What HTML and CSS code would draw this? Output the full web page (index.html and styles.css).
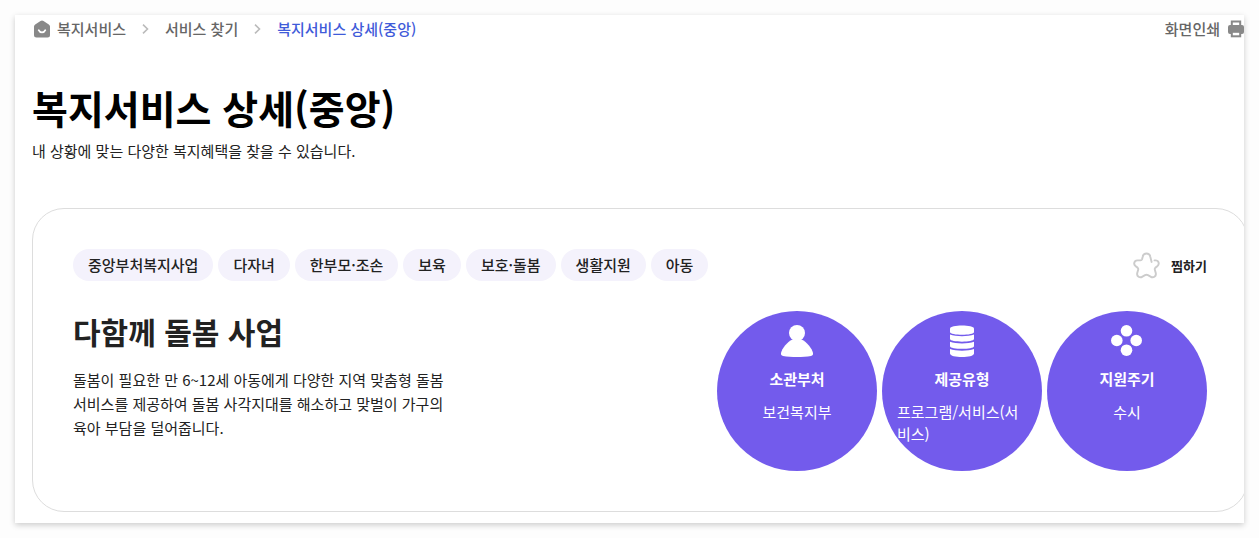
FILE: index.html
```
<!DOCTYPE html>
<html lang="ko">
<head>
    <meta charset="UTF-8">
    <meta name="viewport" content="width=device-width, initial-scale=1.0">
    <title>복지서비스 상세(중앙)</title>
    <link rel="stylesheet" href="styles.css">
</head>
<body>
    <main class="page">
        <div class="top-bar">
            <nav class="breadcrumb" aria-label="현재 위치">
                <a href="#" class="crumb">
                    <svg class="home-icon" width="16" height="18" viewBox="0 0 16 18" aria-hidden="true">
                        <path d="M8 .5c.5 0 1 .2 1.500.5l5.300 3.400c.8.5 1.200 1.200 1.200 2.100v8.500a2.500 2.500 0 0 1-2.500 2.500h-11A2.500 2.500 0 0 1 0 15V6.500c0-.9.4-1.600 1.200-2.100L6.500 1C7 .7 7.500.5 8 .5z" fill="#888"/>
                        <path d="M4.700 10.200c1.300 2.900 5.300 2.900 6.600 0" fill="none" stroke="#fff" stroke-width="1.800" stroke-linecap="round"/>
                    </svg>
                    복지서비스
                </a>
                <svg class="arrow" width="7" height="10" viewBox="0 0 7 10" aria-hidden="true"><path d="M1 .6 5.500 5 1 9.400" fill="none" stroke="#bbb" stroke-width="1.600"/></svg>
                <a href="#" class="crumb">서비스 찾기</a>
                <svg class="arrow" width="7" height="10" viewBox="0 0 7 10" aria-hidden="true"><path d="M1 .6 5.500 5 1 9.400" fill="none" stroke="#bbb" stroke-width="1.600"/></svg>
                <a href="#" class="crumb current" aria-current="page">복지서비스 상세(중앙)</a>
            </nav>
            <button type="button" class="print-button">
                화면인쇄
                <svg width="16" height="18" viewBox="0 0 16 18" aria-hidden="true">
                    <path d="M3.800 6V1.500h8.400V6" fill="none" stroke="#888" stroke-width="2"/>
                    <rect x="0" y="5" width="16" height="9" rx="2" fill="#888"/>
                    <rect x="3.800" y="11.800" width="8.400" height="4.500" fill="#fff" stroke="#888" stroke-width="2"/>
                </svg>
            </button>
        </div>

        <h1>복지서비스 상세(중앙)</h1>
        <p class="lead">내 상황에 맞는 다양한 복지혜택을 찾을 수 있습니다.</p>

        <section class="card">
            <div class="card-top">
                <ul class="tags">
                    <li>중앙부처복지사업</li>
                    <li>다자녀</li>
                    <li>한부모·조손</li>
                    <li>보육</li>
                    <li>보호·돌봄</li>
                    <li>생활지원</li>
                    <li>아동</li>
                </ul>
                <button type="button" class="like-button">
                    <svg width="27" height="27" viewBox="0 0 28 28" aria-hidden="true">
                        <path d="M19.300 10.300 17.900 4.800C17.200 .4 10.800 .4 10.100 4.800L9.400 7.500Q9 8.700 7.800 8.700L4.500 8.700C1 8.900 .2 12.900 2.800 14.700L4.700 16.200Q5.800 17.200 5.300 18.600L4.400 21.800C3.600 25.400 7 27.400 9.800 25.500L12.500 24Q14 23.200 15.500 24L18.200 25.500C21 27.400 24.400 25.400 23.600 21.800L22.700 18.600Q22.200 17.200 23.300 16.200L25.200 14.700C27.800 12.700 26.800 8.700 23.300 8.700L22.300 8.700" fill="none" stroke="#ccc" stroke-width="2" stroke-linecap="round" stroke-linejoin="round"/>
                    </svg>
                    찜하기
                </button>
            </div>

            <div class="card-body">
                <div class="summary">
                    <h2>다함께 돌봄 사업</h2>
                    <p>돌봄이 필요한 만 6~12세 아동에게 다양한 지역 맞춤형 돌봄 서비스를 제공하여 돌봄 사각지대를 해소하고 맞벌이 가구의 육아 부담을 덜어줍니다.</p>
                </div>
                <dl class="circles">
                    <div class="circle">
                        <svg width="34" height="34" viewBox="0 0 34 34" fill="#fff" aria-hidden="true">
                            <circle cx="17" cy="9" r="8"/>
                            <path d="M12.500 15.500h9C27 18 32 24.500 33 29c.3 1.800-.5 2.600-2 3-8 1.400-20 1.400-28 0-1.500-.4-2.300-1.200-2-3 1-4.500 6-11 11.500-13.500z"/>
                        </svg>
                        <dt>소관부처</dt>
                        <dd>보건복지부</dd>
                    </div>
                    <div class="circle">
                        <svg width="34" height="34" viewBox="0 0 34 34" fill="#fff" aria-hidden="true">
                            <path d="M5 4.500C5 .6 29 .6 29 4.500V8c0 3.700-24 3.700-24 0z"/>
                            <path d="M5 10.600c6 2.200 18 2.200 24 0V15c0 3.500-24 3.500-24 0z"/>
                            <path d="M5 17.800c6 2.200 18 2.200 24 0v4.400c0 3.500-24 3.500-24 0z"/>
                            <path d="M5 25c6 2.200 18 2.200 24 0v4.500c0 4.700-24 4.700-24 0z"/>
                        </svg>
                        <dt>제공유형</dt>
                        <dd>프로그램/서비스(서비스)</dd>
                    </div>
                    <div class="circle">
                        <svg width="34" height="34" viewBox="0 0 34 34" fill="#fff" aria-hidden="true">
                            <circle cx="16.500" cy="6.800" r="5.800"/>
                            <circle cx="6.800" cy="16.500" r="5.800"/>
                            <circle cx="26.200" cy="16.500" r="5.800"/>
                            <circle cx="16.500" cy="26.200" r="5.800"/>
                        </svg>
                        <dt>지원주기</dt>
                        <dd>수시</dd>
                    </div>
                </dl>
            </div>
        </section>
    </main>
</body>
</html>
```
FILE: styles.css
```
* {
    box-sizing: border-box;
}
body {
    margin: 0;
    padding: 15px;
    background-color: #fdfdfd;
    font-family: "Noto Sans CJK KR", sans-serif;
    font-size: 15px;
    line-height: 24px;
    color: #222;
}
h1, h2, p, ul, dl, dd {
    margin: 0;
    padding: 0;
}
button {
    display: flex;
    align-items: center;
    padding: 0;
    border: none;
    background: none;
    font-family: inherit;
    cursor: pointer;
}
.page {
    padding: 2px 0 11px 17px;
    background-color: #fff;
    box-shadow: 0 2px 6px rgba(0, 0, 0, 0.2);
    overflow: hidden;
}
.top-bar {
    display: flex;
    justify-content: space-between;
    align-items: center;
}
.breadcrumb {
    display: flex;
    align-items: center;
    gap: 16px;
    padding-left: 2px;
}
.crumb {
    display: flex;
    align-items: center;
    gap: 7px;
    font-weight: 500;
    color: #666;
    text-decoration: none;
}
.crumb.current {
    color: #3f5bd9;
}
.print-button {
    gap: 8px;
    font-size: 15px;
    font-weight: 500;
    line-height: 24px;
    color: #666;
}
h1 {
    margin: 36px 0 2px;
    font-size: 39px;
    font-weight: 700;
    line-height: 60px;
    color: #000;
}
.card {
    margin: 45px -4px 0 0;
    padding: 40px;
    border: 1px solid #ddd;
    border-radius: 32px;
}
.card-top {
    display: flex;
    justify-content: space-between;
    align-items: center;
    margin-bottom: 30px;
}
.tags {
    display: flex;
    flex-wrap: wrap;
    gap: 5px;
    list-style: none;
}
.tags li {
    padding: 4px 15px;
    border-radius: 16px;
    background-color: #f4f2fc;
    font-weight: 500;
}
.like-button {
    gap: 11px;
    font-size: 13px;
    font-weight: 700;
    color: #222;
}
.card-body {
    display: flex;
    justify-content: space-between;
}
.summary {
    max-width: 380px;
}
h2 {
    margin-bottom: 17px;
    font-size: 30px;
    font-weight: 700;
    line-height: 40px;
}
.summary p {
    word-break: keep-all;
}
.circles {
    display: flex;
    gap: 5px;
}
.circle {
    display: flex;
    flex-direction: column;
    align-items: center;
    width: 160px;
    height: 160px;
    padding: 13px 15px;
    border-radius: 50%;
    background-color: #735bec;
    color: #fff;
    line-height: 22px;
}
.circle dt {
    margin: 10px 0 11px;
    font-weight: 700;
}
.circle dd {
    word-break: break-all;
}
```
